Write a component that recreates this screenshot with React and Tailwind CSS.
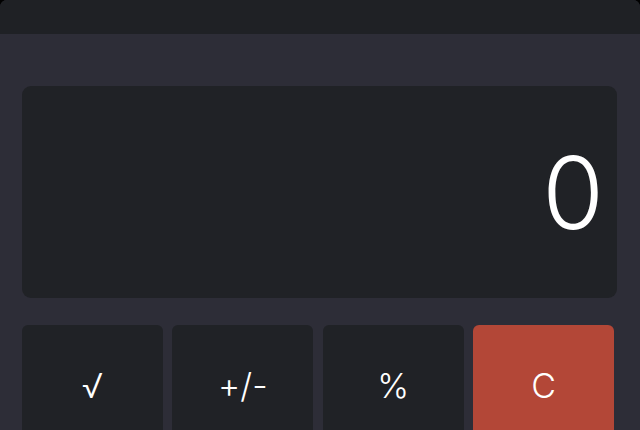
export default function App() {
  const keys = [
    { label: "√", red: false },
    { label: "+/-", red: false },
    { label: "%", red: false },
    { label: "C", red: true },
  ];
  return (
    <div className="w-[640px] h-[430px] overflow-hidden bg-black" style={{ fontFamily: "Inter, 'Liberation Sans', sans-serif" }}>
      <div className="h-full rounded-t-[7px] overflow-hidden bg-[#2d2d37] flex flex-col">
        <div className="h-[34px] bg-[#1f2125] shrink-0" />
        <div className="pl-[22px] pr-[22px] pt-[52px] flex flex-col">
          <div className="h-[212px] w-[595px] rounded-[9px] bg-[#202226] flex items-center justify-end pr-[13px]">
            <span className="text-white text-[100px] font-light leading-none mt-[2px]">0</span>
          </div>
          <div className="mt-[27px] w-[592px] grid grid-cols-4 gap-[9.5px]">
            {keys.map((k) => (
              <div
                key={k.label}
                className={
                  k.red
                    ? "h-[140px] rounded-[6px] bg-[#b34737] flex justify-center pt-[44px]"
                    : "h-[140px] rounded-[6px] bg-[#202226] flex justify-center pt-[44px]"
                }
              >
                <span className="text-white text-[34px] font-light leading-none">{k.label}</span>
              </div>
            ))}
          </div>
        </div>
      </div>
    </div>
  );
}
